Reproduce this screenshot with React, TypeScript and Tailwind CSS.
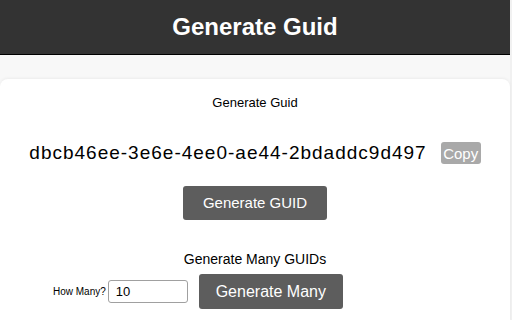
import React from "react";

export default function App() {
  const guid = "dbcb46ee-3e6e-4ee0-ae44-2bdaddc9d497";
  return (
    <div className="min-h-[320px] w-[512px] bg-[#f1f1f1] font-['Liberation_Sans',Arial,sans-serif]">
      <div className="w-[510px] min-h-[320px] bg-[#f8f8f8]">
        <div className="h-[55px] bg-[#333333] border-b border-black flex items-center justify-center">
          <h1 className="text-white text-[24px] font-bold leading-none">Generate Guid</h1>
        </div>
        <div className="mt-[24px] bg-white rounded-t-[8px] shadow-[0_-1px_3px_rgba(0,0,0,0.05)] pt-[16px] pb-[12px]">
          <div className="text-center text-[13px] leading-[16px] text-black">Generate Guid</div>
          <div className="mt-[31px] flex items-center justify-center gap-[14px]">
            <span className="text-[19px] leading-[22px] tracking-[1px] text-black">{guid}</span>
            <button className="h-[22px] w-[40px] rounded-[3px] bg-[#a9a9a9] text-white text-[15px] leading-none">
              Copy
            </button>
          </div>
          <div className="mt-[22px] flex justify-center">
            <button className="h-[34px] w-[144px] rounded-[3px] bg-[#5d5d5d] text-white text-[15px]">
              Generate GUID
            </button>
          </div>
          <div className="mt-[31px] text-center text-[14px] leading-[16px] text-black">Generate Many GUIDs</div>
          <div className="mt-[7px] flex items-center pl-[53px]">
            <label className="text-[10px] text-black">How Many?</label>
            <input
              defaultValue="10"
              className="ml-[2px] h-[23px] w-[80px] rounded-[3px] border border-[#a0a0a0] px-[7px] text-[13px] text-black outline-none"
            />
            <button className="ml-[11px] h-[35px] w-[144px] rounded-[3px] bg-[#5d5d5d] text-white text-[16px]">
              Generate Many
            </button>
          </div>
        </div>
      </div>
    </div>
  );
}
